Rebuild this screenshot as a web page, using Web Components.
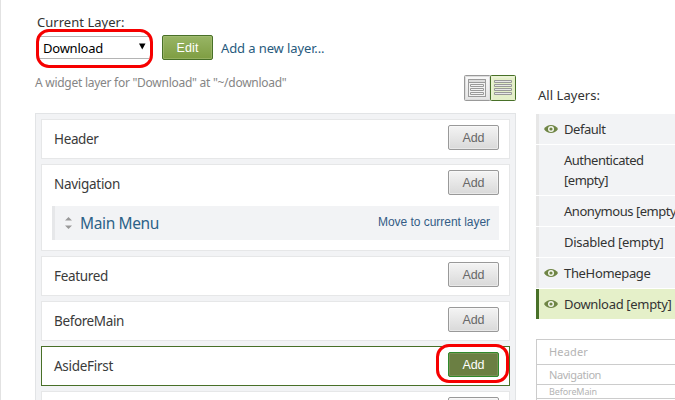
<!DOCTYPE html>
<html lang="en"><head><meta charset="utf-8"><title>Widgets</title>
<style>html,body{margin:0;width:675px;height:400px;overflow:hidden;background:#fff}</style></head>
<body><widget-page></widget-page>
<script>
const define=(name,html,setup)=>customElements.define(name,class extends HTMLElement{
  connectedCallback(){
    if(this.shadowRoot)return;
    const t=document.createElement('template');t.innerHTML=html;
    this.attachShadow({mode:'open'}).append(t.content.cloneNode(true));
    if(setup)setup.call(this,this.shadowRoot);
  }});

/* Label whose tracking is adjusted so that it spans `w` pixels. */
define('ui-label',`<style>:host{display:inline-block;white-space:nowrap;flex:none}</style><slot></slot>`,function(){
  const w=+this.getAttribute('w');
  if(w)this.style.letterSpacing=(w-this.getBoundingClientRect().width)/this.textContent.length+'px';
});

define('ui-button',`<style>
:host{display:flex;box-sizing:border-box;width:51px;height:25px;border:1px solid #999;border-radius:2px;align-items:center;justify-content:center;flex:none;
 font:12.5px/23px "Liberation Sans",Arial,sans-serif;color:#686868;background:linear-gradient(#f4f4f4,#d9d9d9);box-shadow:inset 0 0 0 1px #ffffff66}
ui-label{padding-top:1px}
:host([kind=primary]){border-color:#487028;color:#fff;background:linear-gradient(#98b565,#7e9d42);box-shadow:inset 0 0 0 1px #aac27b88}
:host([kind=active]){border-color:#2f8a2c;color:#fff;background:#6b7f43;box-shadow:inset 0 0 0 1px #7c8f55}
</style><ui-label></ui-label>`,function(r){
 const l=r.querySelector('ui-label');l.textContent=this.textContent;
 l.style.letterSpacing=(22-l.getBoundingClientRect().width)/this.textContent.length+'px';});

define('red-ring',`<style>:host{position:absolute;box-sizing:border-box;border:3px solid #f60000;border-radius:13px;pointer-events:none}</style>`);

define('layer-select',`<style>
:host{display:flex;position:relative;box-sizing:border-box;width:112px;height:23px;margin-left:2px;border-top:1px solid #b4b4b4;border-bottom:1px solid #b4b4b4;align-items:center;padding:0 3px 0 6px;color:#000}
svg{margin-left:auto;margin-top:-3px}
red-ring{left:-1px;top:-8px;width:117px;height:39px}
</style><slot></slot><svg width="8" height="7"><path d="M1 .5h6.500L4.250 6.500z"/></svg><red-ring></red-ring>`);

define('view-switch',`<style>
:host{display:flex;width:52px;height:26px}
svg{display:block}
</style><svg width="52" height="26" fill="none">
<defs><linearGradient id="g" x2="0" y2="1"><stop stop-color="#fafafa"/><stop offset="1" stop-color="#e4e4e4"/></linearGradient></defs>
<rect x=".5" y=".5" width="26" height="25" rx="1" fill="url(#g)" stroke="#999"/><rect x="1.5" y="1.5" width="24" height="23" stroke="#ddd"/>
<rect x="26.5" y=".5" width="25" height="25" rx="1" fill="#e4efc9" stroke="#487028"/><path d="M28 24V2H50" stroke="#f0f6df"/>
<g stroke="#9a9a9a" fill="#f3f3f3"><rect x="4.5" y="4.5" width="17" height="17"/><path d="M4.500 7.500h17V4.500h-17z" fill="#ddd"/><path d="M6.500 9.500h13v2h-13zM6.500 13.500h13v2h-13zM6.500 17.500h13v2h-13z"/></g>
<g stroke="#999" fill="#e8e8e8"><path d="M30.500 5.500h17v2h-17zM30.500 9.500h17v2h-17zM30.500 13.500h17v2h-17zM30.500 17.500h17v2h-17z"/></g></svg>`);

define('zone-box',`<style>
:host{display:flow-root;flex:none;position:relative;box-sizing:border-box;min-height:40px;border:1px solid #e6e7e8;background:#fff;padding:5px 10px 0;font-size:13.5px;color:#3a3a3a}
:host([active]){border-color:#487028}
header{display:flex;justify-content:space-between;height:25px;padding-left:2px}
header ui-label{line-height:20px;padding-top:4px}
red-ring{right:0;top:-3px;width:73px;height:39px}
</style><header><ui-label></ui-label><ui-button>Add</ui-button></header><slot></slot>`,function(r){
  const l=r.querySelector('ui-label');l.textContent=this.getAttribute('name');
  if(l.textContent)l.style.letterSpacing=(+this.getAttribute('w')-l.getBoundingClientRect().width)/l.textContent.length+'px';
  if(this.hasAttribute('active')){r.querySelector('ui-button').setAttribute('kind','active');r.append(document.createElement('red-ring'));}
});

define('widget-row',`<style>
:host{display:flex;box-sizing:border-box;height:34px;margin:11px 0 10px;background:#f2f3f5;border-left:3px solid #e6e7e9;align-items:center;padding:0 9px 0 10px;color:#27587d}
svg{margin-right:8px;margin-top:-1px}
.name{font-size:15.5px;color:#2c6288}
.move{margin-left:auto;font:12px "Liberation Sans",Arial,sans-serif;margin-top:-3px;color:#345c85}
</style><svg width="7" height="14" fill="#999"><path d="M0 4.500L3.500 1 7 4.500zM0 9.500h7L3.500 13z"/></svg><ui-label class="name" w="79">Main Menu</ui-label><ui-label class="move" w="112">Move to current layer</ui-label>`);

define('layer-item',`<style>
:host{display:flex;box-sizing:border-box;min-height:30px;border-left:3px solid #e7e7e7;background:#f2f3f5;padding:5px 0 5px 5px;line-height:20px;font-size:13px;color:#333}
:host([active]){background:#e5f0c9;border-color:#487028}
svg{width:14px;height:10px;margin:5px 6px 0 0;visibility:hidden;flex:none}
:host([visible]) svg{visibility:visible}
</style><svg viewBox="0 0 14 10"><path d="M0 5C3-.3 11-.3 14 5 11 10.300 3 10.300 0 5z" fill="#6f8545"/><circle cx="7" cy="5" r="3" fill="#f5f7ef"/><circle cx="7" cy="5" r="1.600" fill="#6f8545"/></svg><div><slot></slot></div>`);

define('zone-map',`<style>
:host{display:block;border:1px solid #ccc;border-right:0;color:#b4b4b4;height:80px}
div{box-sizing:border-box;border-bottom:1px solid #ccc;padding-left:12px;font-size:11px;display:flex}
.a{height:25px;line-height:24px}.b{height:20px;line-height:19px}.c{height:14px;font-size:9px;line-height:13px}
</style><div class="a"><ui-label w="39">Header</ui-label></div><div class="b"><ui-label w="52">Navigation</ui-label></div><div class="c"><ui-label w="48">BeforeMain</ui-label></div>`);

define('widget-page',`<style>
:host{display:flex;box-sizing:border-box;width:675px;height:400px;overflow:hidden;border-left:1px solid #e2e2e2;padding-left:34px;gap:20px;font:13px/20px "Noto Sans","Open Sans",sans-serif;color:#333}
main{width:481px;flex:none;padding-top:12px}
.cur{display:block;margin-left:2px;width:max-content;height:20px}
.bar{display:flex;align-items:center;margin-top:3px;height:25px}
.bar ui-button{margin-left:13px}
.new{margin-left:8px;color:#275a7d}
.info{display:flex;justify-content:space-between;height:26px;margin-top:15px}
.desc{font-size:12px;line-height:16px;color:#858585}
.zones{display:flex;box-sizing:border-box;flex-direction:column;gap:5px;margin-top:12px;height:300px;border:1px solid #e2e4e6;background:#f2f3f5;padding:5px}
aside{width:150px;flex:none;padding-top:85px}
.all{display:block;width:max-content;margin-left:2px;height:29px}
nav{display:flex;flex-direction:column;gap:1px}
zone-map{margin-top:20px}
</style>
<main><ui-label class="cur" w="87.500">Current Layer:</ui-label>
<div class="bar"><layer-select><ui-label w="60">Download</ui-label></layer-select><ui-button kind="primary">Edit</ui-button><ui-label class="new" w="103.500">Add a new layer...</ui-label></div>
<div class="info"><ui-label class="desc" w="251.500">A widget layer for "Download" at "~/download"</ui-label><view-switch></view-switch></div>
<section class="zones"><zone-box name="Header" w="44.500"></zone-box><zone-box name="Navigation" w="66"><widget-row></widget-row></zone-box><zone-box name="Featured" w="54"></zone-box><zone-box name="BeforeMain" w="70"></zone-box><zone-box name="AsideFirst" w="59"></zone-box><zone-box name="" w="0"></zone-box></section></main>
<aside><ui-label class="all" w="62">All Layers:</ui-label>
<nav><layer-item visible><ui-label w="41.500">Default</ui-label></layer-item>
<layer-item><ui-label w="79.500">Authenticated</ui-label><br><ui-label w="44">[empty]</ui-label></layer-item>
<layer-item><ui-label w="116">Anonymous [empty]</ui-label></layer-item>
<layer-item><ui-label w="99.500">Disabled [empty]</ui-label></layer-item>
<layer-item visible><ui-label w="86.500">TheHomepage</ui-label></layer-item>
<layer-item visible active><ui-label w="107.500">Download [empty]</ui-label></layer-item></nav>
<zone-map></zone-map></aside>`.replace('w="59"','w="59" active'));
</script></body></html>
